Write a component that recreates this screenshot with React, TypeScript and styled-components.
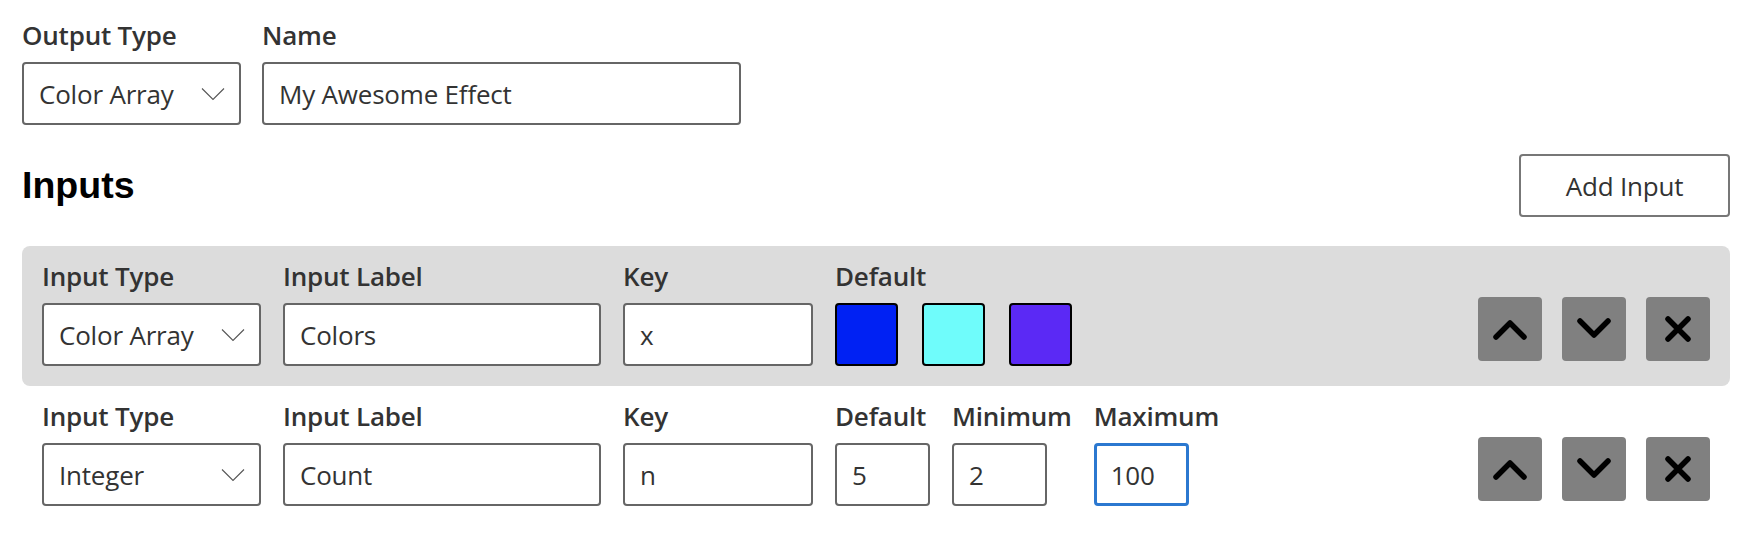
import React from "react";
import styled, { createGlobalStyle, css } from "styled-components";

const GlobalStyle = createGlobalStyle`
  html, body { margin: 0; padding: 0; background: #ffffff; }
  body { font-family: "Open Sans", "Noto Sans", sans-serif; color: #333333; }
  * { box-sizing: border-box; }
`;

const Page = styled.div`
  padding: 17px 26px 0 22px;
  display: flex;
  flex-direction: column;
`;

const TopRow = styled.div`
  display: flex;
  gap: 21px;
  align-items: flex-end;
`;

const Field = styled.label`
  display: flex;
  flex-direction: column;
  gap: 9px;
`;

const Label = styled.span`
  font-size: 26px;
  line-height: 36px;
  font-weight: 600;
  color: #333333;
  white-space: nowrap;
  letter-spacing: -0.2px;
`;

const controlBase = css`
  height: 63px;
  border: 2px solid #666666;
  border-radius: 4px;
  background: #ffffff;
  font-family: "Open Sans", "Noto Sans", sans-serif;
  font-size: 26px;
  letter-spacing: -0.2px;
  color: #333333;
  padding: 0 15px;
  outline: none;
  margin: 0;
`;

const TextInput = styled.input<{ $width: number; $focused?: boolean }>`
  ${controlBase};
  width: ${(p) => p.$width}px;
  ${(p) =>
    p.$focused &&
    css`
      border: 3px solid #2b78d0;
      padding: 0 14px;
    `}
`;

const SelectWrap = styled.div`
  position: relative;
  width: 219px;
`;

const Select = styled.select`
  ${controlBase};
  width: 100%;
  appearance: none;
  -webkit-appearance: none;
`;

const Chevron = styled.svg`
  position: absolute;
  right: 16px;
  top: 50%;
  transform: translateY(-50%);
  pointer-events: none;
`;

const HeadingRow = styled.div`
  display: flex;
  justify-content: space-between;
  align-items: center;
  margin-top: 29px;
  margin-bottom: 29px;
`;

const Heading = styled.h2`
  margin: 0;
  font-family: "Liberation Sans", Arial, sans-serif;
  font-weight: 700;
  font-size: 37.5px;
  color: #000000;
`;

const AddButton = styled.button`
  width: 211px;
  height: 63px;
  border: 2px solid #777777;
  border-radius: 4px;
  background: #ffffff;
  font-family: "Open Sans", "Noto Sans", sans-serif;
  font-size: 26px;
  letter-spacing: -0.2px;
  font-weight: 500;
  color: #333333;
  cursor: pointer;
`;

const InputRow = styled.div<{ $shaded?: boolean }>`
  display: flex;
  align-items: flex-end;
  gap: 22px;
  padding: 12px 20px 20px 20px;
  border-radius: 8px;
  background: ${(p) => (p.$shaded ? "#dcdcdc" : "transparent")};
`;

const Swatches = styled.div`
  display: flex;
  gap: 24px;
`;

const Swatch = styled.div<{ $color: string }>`
  width: 63px;
  height: 63px;
  border: 2px solid #000000;
  border-radius: 4px;
  background: ${(p) => p.$color};
`;

const Actions = styled.div`
  margin-left: auto;
  display: flex;
  gap: 20px;
  margin-bottom: 5px;
`;

const IconButton = styled.button`
  width: 64px;
  height: 64px;
  border: none;
  border-radius: 4px;
  background: #808080;
  display: flex;
  align-items: center;
  justify-content: center;
  padding: 0;
  cursor: pointer;
`;

const SelectChevron = () => (
  <Chevron width="24" height="13" viewBox="0 0 24 13">
    <path d="M1 1 L12 12 L23 1" fill="none" stroke="#555" strokeWidth="1.1" />
  </Chevron>
);

const UpIcon = () => (
  <svg width="36" height="24" viewBox="0 0 36 24">
    <path d="M4 20 L18 6 L32 20" fill="none" stroke="#000" strokeWidth="5.5" strokeLinecap="round" strokeLinejoin="round" />
  </svg>
);

const DownIcon = () => (
  <svg width="36" height="24" viewBox="0 0 36 24">
    <path d="M4 4 L18 18 L32 4" fill="none" stroke="#000" strokeWidth="5.5" strokeLinecap="round" strokeLinejoin="round" />
  </svg>
);

const CloseIcon = () => (
  <svg width="30" height="30" viewBox="0 0 30 30">
    <path d="M5 5 L25 25 M25 5 L5 25" fill="none" stroke="#000" strokeWidth="5.5" strokeLinecap="round" />
  </svg>
);

const TypeSelect = ({ value, options }: { value: string; options: string[] }) => (
  <SelectWrap>
    <Select defaultValue={value}>
      {options.map((o) => (
        <option key={o}>{o}</option>
      ))}
    </Select>
    <SelectChevron />
  </SelectWrap>
);

const types = ["Integer", "Number", "Color", "Color Array", "Boolean"];

const RowActions = () => (
  <Actions>
    <IconButton aria-label="Move up"><UpIcon /></IconButton>
    <IconButton aria-label="Move down"><DownIcon /></IconButton>
    <IconButton aria-label="Remove"><CloseIcon /></IconButton>
  </Actions>
);

export default function App() {
  return (
    <>
      <GlobalStyle />
      <Page>
        <TopRow>
          <Field>
            <Label>Output Type</Label>
            <TypeSelect value="Color Array" options={["Color", "Color Array", "Number"]} />
          </Field>
          <Field>
            <Label>Name</Label>
            <TextInput $width={479} defaultValue="My Awesome Effect" />
          </Field>
        </TopRow>

        <HeadingRow>
          <Heading>Inputs</Heading>
          <AddButton>Add Input</AddButton>
        </HeadingRow>

        <InputRow $shaded>
          <Field>
            <Label>Input Type</Label>
            <TypeSelect value="Color Array" options={types} />
          </Field>
          <Field>
            <Label>Input Label</Label>
            <TextInput $width={318} defaultValue="Colors" />
          </Field>
          <Field>
            <Label>Key</Label>
            <TextInput $width={190} defaultValue="x" />
          </Field>
          <Field as="div">
            <Label>Default</Label>
            <Swatches>
              <Swatch $color="#0021f3" />
              <Swatch $color="#6ffcfb" />
              <Swatch $color="#5b29f5" />
            </Swatches>
          </Field>
          <RowActions />
        </InputRow>

        <InputRow>
          <Field>
            <Label>Input Type</Label>
            <TypeSelect value="Integer" options={types} />
          </Field>
          <Field>
            <Label>Input Label</Label>
            <TextInput $width={318} defaultValue="Count" />
          </Field>
          <Field>
            <Label>Key</Label>
            <TextInput $width={190} defaultValue="n" />
          </Field>
          <Field>
            <Label>Default</Label>
            <TextInput $width={95} defaultValue="5" />
          </Field>
          <Field>
            <Label>Minimum</Label>
            <TextInput $width={95} defaultValue="2" />
          </Field>
          <Field>
            <Label>Maximum</Label>
            <TextInput $width={95} $focused defaultValue="100" />
          </Field>
          <RowActions />
        </InputRow>
      </Page>
    </>
  );
}
